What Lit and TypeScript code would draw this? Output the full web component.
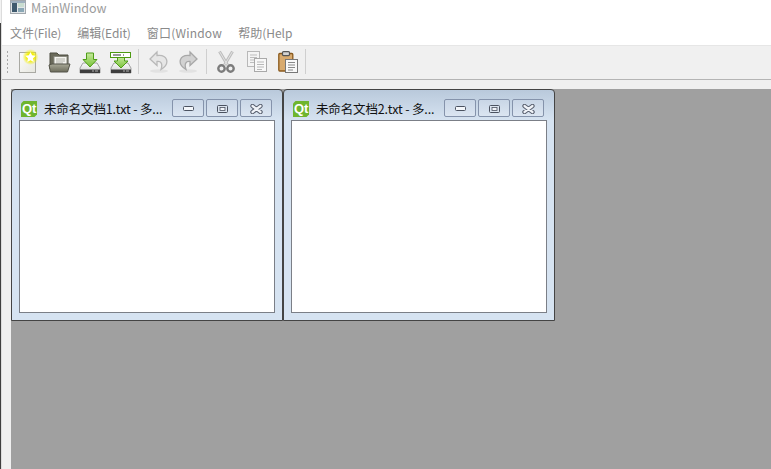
import { LitElement, html, css, svg } from "lit";
import { customElement, property } from "lit/decorators.js";

const driveArrow = svg`<path d="M5 13h14l3 5v5H2v-5z" fill="url(#dk)" stroke="#a2a2a2"/><rect x="2" y="19.500" width="20" height="3.500" fill="#3e3e3e"/><path d="M14 21h2M17 21h3" stroke="#b0b0b0"/>`;

const icons = {
  appIcon: svg`<svg width="16" height="14" viewBox="0 0 16 14"><rect x="0.5" y="0.5" width="15" height="13" fill="#e2e6e8" stroke="#a2a8ad"/><rect x="1" y="1" width="14" height="2" fill="#9fb0bf"/><rect x="2" y="3" width="5" height="9" fill="#3f5a6e"/><rect x="8" y="3" width="6" height="4" fill="#c9ddd0"/><rect x="8" y="8" width="6" height="4" fill="#8aa7b5"/></svg>`,
  newFile: svg`<svg width="24" height="26" viewBox="0 0 24 26"><defs><radialGradient id="g1"><stop offset="0.45" stop-color="#f4f000"/><stop offset="1" stop-color="#f4f000" stop-opacity="0"/></radialGradient><linearGradient id="pg" x1="0" y1="0" x2="1" y2="1"><stop offset="0" stop-color="#fdfdfd"/><stop offset="1" stop-color="#e6e6de"/></linearGradient></defs><rect x="3.500" y="3.500" width="16" height="20" fill="url(#pg)" stroke="#a9a9a3"/><circle cx="14.500" cy="8" r="8" fill="url(#g1)"/><path d="M14.500 3l1.600 3.300 3.600.5-2.600 2.500.6 3.600-3.200-1.700-3.200 1.700.6-3.600-2.600-2.500 3.600-.5z" fill="#fff"/></svg>`,
  open: svg`<svg width="24" height="24" viewBox="0 0 24 24"><defs><linearGradient id="fo" x1="0" y1="0" x2="0" y2="1"><stop offset="0" stop-color="#a8a896"/><stop offset="1" stop-color="#6b6b5a"/></linearGradient></defs><path d="M3 3h7l2 2h9v14H3z" fill="#6a6a5a" stroke="#4c4c40"/><rect x="7" y="6.500" width="13" height="8" fill="#f5f5f0" stroke="#8a8a80"/><path d="M9 9h9M9 11h9M9 13h7" stroke="#b0b0a8"/><path d="M5 14h18l-2.500 8H3.500L2 15z" fill="url(#fo)" stroke="#55554a"/></svg>`,
  save: svg`<svg width="24" height="24" viewBox="0 0 24 24"><defs><linearGradient id="dk" x1="0" y1="0" x2="0" y2="1"><stop offset="0" stop-color="#fafafa"/><stop offset="1" stop-color="#cfcfcf"/></linearGradient><linearGradient id="gr" x1="0" y1="0" x2="0" y2="1"><stop offset="0" stop-color="#c6ea9c"/><stop offset="1" stop-color="#78c238"/></linearGradient></defs>${driveArrow}<path d="M8.500 3h7v6.500h3.500L12 17 5 9.500h3.500z" fill="url(#gr)" stroke="#4f9d18"/></svg>`,
  saveAs: svg`<svg width="24" height="24" viewBox="0 0 24 24">${driveArrow}<path d="M8.500 7h7v4h3.500L12 18 5 11h3.500z" fill="url(#gr)" stroke="#4f9d18"/><rect x="1.500" y="2.500" width="20" height="5" fill="#fff" stroke="#4d9a12"/><path d="M4 5h8M14 5h1" stroke="#777" stroke-width="1.400"/></svg>`,
  undo: svg`<svg width="20" height="24" viewBox="0 0 20 24"><ellipse cx="10" cy="21" rx="9" ry="1.800" fill="#e2e2e2"/><path d="M8 2L1 9l7 6.500V11.500c4-.5 6 2 4 8 5-3 6.500-7 5.500-10C16 5.500 12 5 8 5.500z" fill="#e6e6e6" stroke="#b8b8b8" stroke-width="1.300"/></svg>`,
  redo: svg`<svg width="20" height="24" viewBox="0 0 20 24"><ellipse cx="10" cy="21" rx="9" ry="1.800" fill="#e2e2e2"/><path d="M12 2l7 7-7 6.500V11.500c-4-.5-6 2-4 8-5-3-6.500-7-5.500-10C4 5.500 8 5 12 5.500z" fill="#d2d2d2" stroke="#a8a8a8" stroke-width="1.300"/></svg>`,
  cut: svg`<svg width="20" height="26" viewBox="0 0 20 26"><path d="M3.500 2.500l8 13.500M16.500 2.500l-8 13.500" stroke="#bdbdbd" stroke-width="3"/><path d="M3.500 2.500l8 13.500M16.500 2.500l-8 13.500" stroke="#e4e4e4" stroke-width="1" fill="none"/><circle cx="5.500" cy="19.500" r="3.200" fill="none" stroke="#7c7c7c" stroke-width="2.400"/><circle cx="14.500" cy="19.500" r="3.200" fill="none" stroke="#7c7c7c" stroke-width="2.400"/></svg>`,
  copy: svg`<svg width="20" height="22" viewBox="0 0 20 22"><rect x="0.500" y="0.500" width="12" height="15" fill="#f4f4f4" stroke="#b8b8b8"/><path d="M3 4h7M3 6.500h7M3 9h7M3 11.500h5" stroke="#bdbdbd"/><rect x="7.500" y="7.500" width="12" height="13" fill="#f8f8f8" stroke="#a9a9a9"/><path d="M10 11h7M10 13.500h7M10 16h7M10 18.500h5" stroke="#b8b8b8"/></svg>`,
  paste: svg`<svg width="20" height="22" viewBox="0 0 20 22"><rect x="0.800" y="2.500" width="14" height="17.500" rx="1" fill="#d8aa6e" stroke="#8a5a1c" stroke-width="1.300"/><rect x="4.500" y="0.600" width="7" height="4" rx="1" fill="#d4d4d4" stroke="#555" stroke-width="1.200"/><rect x="7.500" y="8.500" width="12" height="13" fill="#f8f8f8" stroke="#777"/><path d="M10 11.500h7M10 14h7M10 16.500h7M10 19h5" stroke="#888"/></svg>`,
  qt: svg`<svg width="16" height="16" viewBox="0 0 16 16"><path d="M2.500 0H16v13.500L13.500 16H0V2.500z" fill="#6fb52e"/></svg>`,
  min: svg`<svg width="11" height="5" viewBox="0 0 11 5"><rect x="0.500" y="0.500" width="10" height="4" rx="1" fill="#f3f6fa" stroke="#4b5260"/></svg>`,
  max: svg`<svg width="11" height="8" viewBox="0 0 11 8"><rect x="0.500" y="0.500" width="10" height="7" rx="1" fill="#dce5f0" stroke="#4b5260"/><rect x="3" y="2.500" width="5" height="3" fill="#f3f6fa" stroke="#4b5260" stroke-width="0.800"/></svg>`,
  close: svg`<svg width="13" height="10" viewBox="0 0 13 10"><path d="M2.500 2l8 6M10.500 2l-8 6" stroke="#5a6170" stroke-width="4.400" stroke-linecap="round"/><path d="M2.500 2l8 6M10.500 2l-8 6" stroke="#f0f3f8" stroke-width="2.200" stroke-linecap="round"/></svg>`,
};

@customElement("mdi-sub")
class MdiSub extends LitElement {
  @property() heading = "";
  static styles = css`
    :host { display: block; width: 272px; height: 232px; box-sizing: border-box; }
    .win { box-sizing: border-box; height: 100%; border: 1px solid #444; border-radius: 4px 4px 0 0;
      background: linear-gradient(#b9c9db 0, #d6e3f1 30px, #d6e3f1 100%); padding: 0 7px 7px 7px; display: flex; flex-direction: column; }
    .bar { height: 30px; display: flex; align-items: center; padding-top: 6px; box-sizing: border-box; }
    .qt { position: relative; width: 16px; height: 16px; margin: 1px 7px 0 2px; flex: none; }
    .qt span { position: absolute; inset: 0; display: flex; align-items: center; justify-content: center; font: bold 13px "Liberation Sans", sans-serif; letter-spacing: -0.3px; color: #fff; }
    .title { flex: 1; font: 12.5px/16px "Noto Sans CJK SC", sans-serif; color: #111; white-space: nowrap; overflow: hidden; letter-spacing: -0.15px; padding-top: 2px; }
    .btns { display: flex; gap: 2px; margin-right: 3px; }
    .btn { width: 32px; height: 18px; box-sizing: border-box; border: 1px solid #8593ab; border-radius: 2px; padding-top: 1px;
      background: linear-gradient(#c9d6e6, #dbe5f1); display: flex; align-items: center; justify-content: center; }
    .edit { flex: 1; background: #fff; border: 1px solid #7b7f87; }
  `;
  render() {
    return html`<div class="win">
      <div class="bar">
        <div class="qt">${icons.qt}<span>Qt</span></div>
        <div class="title">${this.heading}</div>
        <div class="btns">
          <div class="btn">${icons.min}</div>
          <div class="btn">${icons.max}</div>
          <div class="btn">${icons.close}</div>
        </div>
      </div>
      <div class="edit"></div>
    </div>`;
  }
}

@customElement("app-root")
class AppRoot extends LitElement {
  static styles = css`
    :host { display: block; width: 771px; height: 469px; overflow: hidden; background: #f0f0f0; }
    .root { height: 469px; display: flex; }
    .edge { width: 1px; flex: none; background: linear-gradient(#f2f2f2 23px, #3f3f3f 23px); border-right: 1px solid #dcdcdc; }
    .col { flex: 1; min-width: 0; display: flex; flex-direction: column; background: #f0f0f0; }
    .titlebar { height: 22px; box-sizing: border-box; background: #fff; display: flex; align-items: flex-start; padding-left: 8px; gap: 5px; font: 12.5px/16px "Noto Sans CJK SC", sans-serif; color: #9c9c9c; }
    .menu { height: 24px; box-sizing: border-box; background: #fff; display: flex; align-items: center; padding: 0 0 1px 8px; gap: 16px; font: 12px/16px "Noto Sans CJK SC", sans-serif; color: #8a8a8a; border-bottom: 1px solid #e6e6e6; }
    .tight { letter-spacing: -0.1px; }
    .loose { letter-spacing: 0.2px; }
    .toolbar { height: 34px; box-sizing: border-box; display: flex; align-items: center; background: #f0f0f0; border-bottom: 1px solid #b4b4b4; padding: 0 0 2px 4px; }
    .grip { width: 3px; height: 24px; margin-right: 3px; background-image: radial-gradient(#a8a8a8 45%, transparent 50%); background-size: 3px 4px; }
    .tool { width: 31px; height: 28px; display: flex; align-items: center; justify-content: center; flex: none; }
    .narrow { width: 29px; }
    .sep { width: 1px; height: 25px; background: #cfcfcf; flex: none; }
    .s1 { margin: 0 5px 0 2px; }
    .s2 { margin: 0 3px 0 4px; }
    .s3 { margin: 0 0 0 2px; }
    .gap { height: 9px; flex: none; }
    .main { flex: 1; display: flex; padding-left: 9px; min-height: 0; }
    .mdi { flex: 1; background: #a0a0a0; display: flex; align-items: flex-start; }
  `;
  render() {
    return html`<div class="root">
      <div class="edge"></div>
      <div class="col">
        <div class="titlebar">${icons.appIcon}<span>MainWindow</span></div>
        <div class="menu"><span class="tight">文件(File)</span><span class="tight">编辑(Edit)</span><span class="loose">窗口(Window</span><span>帮助(Help</span></div>
        <div class="toolbar">
          <div class="grip"></div>
          <div class="tool">${icons.newFile}</div>
          <div class="tool">${icons.open}</div>
          <div class="tool">${icons.save}</div>
          <div class="tool">${icons.saveAs}</div>
          <div class="sep s1"></div>
          <div class="tool narrow">${icons.undo}</div>
          <div class="tool narrow">${icons.redo}</div>
          <div class="sep s2"></div>
          <div class="tool">${icons.cut}</div>
          <div class="tool">${icons.copy}</div>
          <div class="tool">${icons.paste}</div>
          <div class="sep s3"></div>
        </div>
        <div class="gap"></div>
        <div class="main"><div class="mdi">
          <mdi-sub heading="未命名文档1.txt - 多..."></mdi-sub>
          <mdi-sub heading="未命名文档2.txt - 多..."></mdi-sub>
        </div></div>
      </div>
    </div>`;
  }
}
